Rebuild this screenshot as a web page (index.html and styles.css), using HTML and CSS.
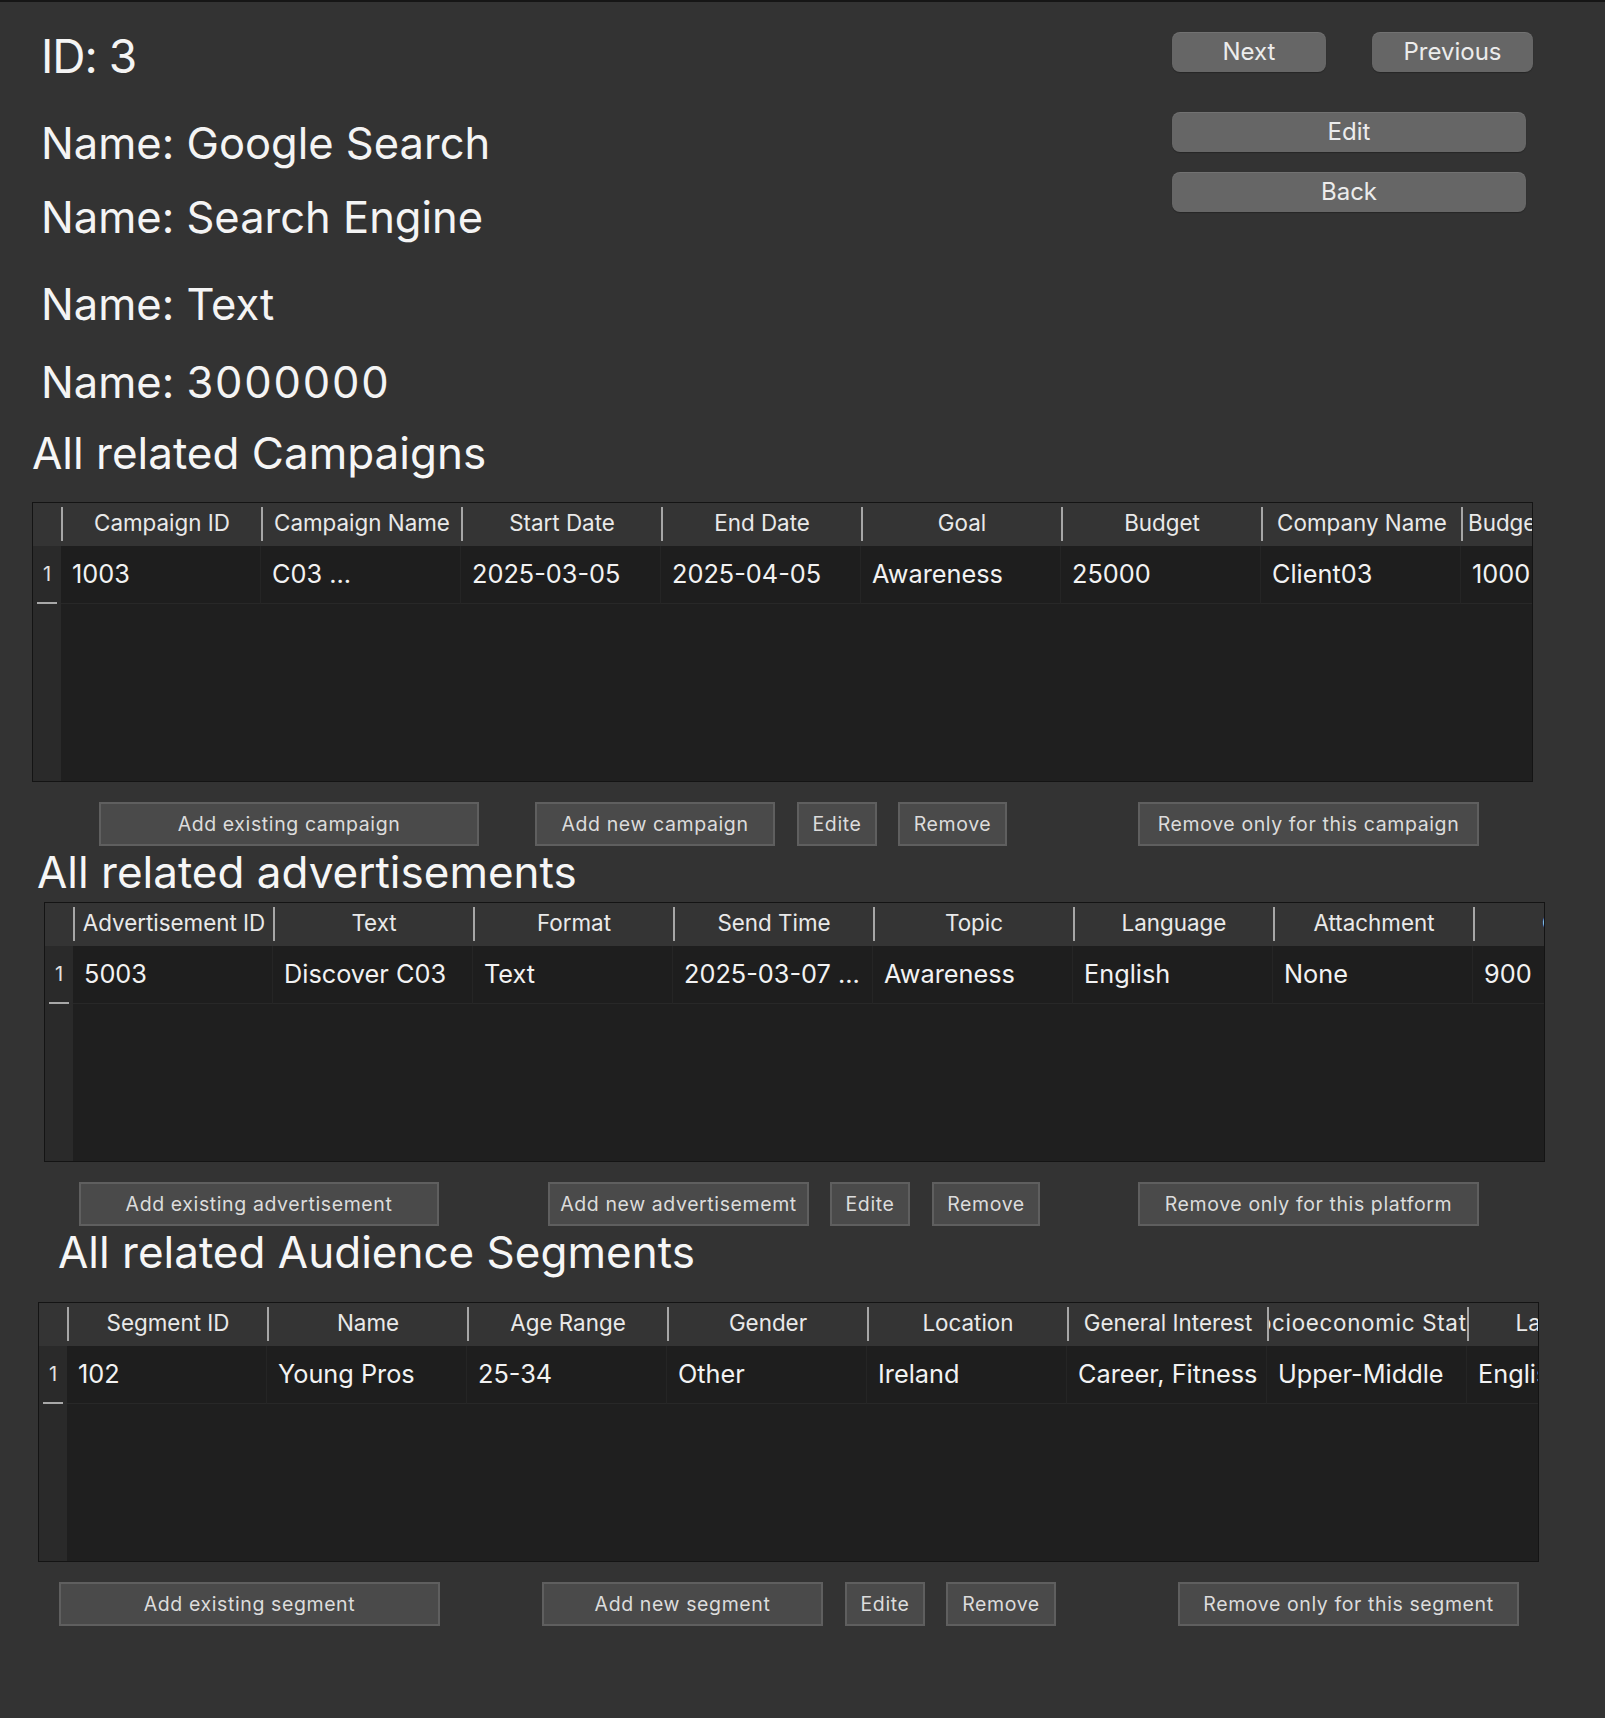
FILE: index.html
```html
<!DOCTYPE html>
<html lang="en">
<head>
<meta charset="utf-8">
<title>Platform details</title>
<link rel="stylesheet" href="styles.css">
</head>
<body>
<div class="app">
  <header class="top">
    <div class="info">
      <div class="id-line">ID: 3</div>
      <div class="field f1">Name: Google Search</div>
      <div class="field f2">Name: Search Engine</div>
      <div class="field f3">Name: Text</div>
      <div class="field f4">Name: <span class="num">3000000</span></div>
    </div>
    <nav class="nav">
      <div class="nav-row">
        <button class="pill pill-next">Next</button>
        <button class="pill pill-prev">Previous</button>
      </div>
      <button class="pill pill-wide pill-edit">Edit</button>
      <button class="pill pill-wide pill-back">Back</button>
    </nav>
  </header>

  <section class="section sec-campaigns">
    <h2 class="sec-title">All related Campaigns</h2>
    <div class="grid grid-tall">
      <div class="thead">
        <div class="corner"></div>
        <div class="th"><div class="th-label">Campaign ID</div></div>
        <div class="th"><div class="th-label">Campaign Name</div></div>
        <div class="th"><div class="th-label">Start Date</div></div>
        <div class="th"><div class="th-label">End Date</div></div>
        <div class="th"><div class="th-label">Goal</div></div>
        <div class="th"><div class="th-label">Budget</div></div>
        <div class="th"><div class="th-label">Company Name</div></div>
        <div class="th"><div class="th-label th-start">Budget Remaining</div></div>
      </div>
      <div class="tbody">
        <div class="rowhead"><div class="rownum">1</div></div>
        <div class="rows">
          <div class="tr">
            <div class="td">1003</div>
            <div class="td">C03 ...</div>
            <div class="td">2025-03-05</div>
            <div class="td">2025-04-05</div>
            <div class="td">Awareness</div>
            <div class="td">25000</div>
            <div class="td">Client03</div>
            <div class="td">1000</div>
          </div>
        </div>
      </div>
    </div>
    <div class="actions acts-campaign">
      <button class="act">Add existing campaign</button>
      <button class="act">Add new campaign</button>
      <button class="act">Edite</button>
      <button class="act">Remove</button>
      <button class="act">Remove only for this campaign</button>
    </div>
  </section>

  <section class="section sec-ads">
    <h2 class="sec-title">All related advertisements</h2>
    <div class="grid">
      <div class="thead">
        <div class="corner"></div>
        <div class="th"><div class="th-label">Advertisement ID</div></div>
        <div class="th"><div class="th-label">Text</div></div>
        <div class="th"><div class="th-label">Format</div></div>
        <div class="th"><div class="th-label">Send Time</div></div>
        <div class="th"><div class="th-label">Topic</div></div>
        <div class="th"><div class="th-label">Language</div></div>
        <div class="th"><div class="th-label">Attachment</div></div>
        <div class="th"><div class="th-label"><span>Clicks</span></div></div>
      </div>
      <div class="tbody">
        <div class="rowhead"><div class="rownum">1</div></div>
        <div class="rows">
          <div class="tr">
            <div class="td">5003</div>
            <div class="td">Discover C03</div>
            <div class="td">Text</div>
            <div class="td">2025-03-07 ...</div>
            <div class="td">Awareness</div>
            <div class="td">English</div>
            <div class="td">None</div>
            <div class="td">900</div>
          </div>
        </div>
      </div>
    </div>
    <div class="actions acts-ads">
      <button class="act">Add existing advertisement</button>
      <button class="act">Add new advertisememt</button>
      <button class="act">Edite</button>
      <button class="act">Remove</button>
      <button class="act">Remove only for this platform</button>
    </div>
  </section>

  <section class="section sec-segments">
    <h2 class="sec-title">All related Audience Segments</h2>
    <div class="grid">
      <div class="thead">
        <div class="corner"></div>
        <div class="th"><div class="th-label">Segment ID</div></div>
        <div class="th"><div class="th-label">Name</div></div>
        <div class="th"><div class="th-label">Age Range</div></div>
        <div class="th"><div class="th-label">Gender</div></div>
        <div class="th"><div class="th-label">Location</div></div>
        <div class="th"><div class="th-label">General Interest</div></div>
        <div class="th"><div class="th-label"><span class="wide-label">Socioeconomic Status</span></div></div>
        <div class="th"><div class="th-label"><span>Language</span></div></div>
      </div>
      <div class="tbody">
        <div class="rowhead"><div class="rownum">1</div></div>
        <div class="rows">
          <div class="tr">
            <div class="td">102</div>
            <div class="td">Young Pros</div>
            <div class="td">25-34</div>
            <div class="td">Other</div>
            <div class="td">Ireland</div>
            <div class="td">Career, Fitness</div>
            <div class="td">Upper-Middle</div>
            <div class="td">English</div>
          </div>
        </div>
      </div>
    </div>
    <div class="actions acts-segments">
      <button class="act">Add existing segment</button>
      <button class="act">Add new segment</button>
      <button class="act">Edite</button>
      <button class="act">Remove</button>
      <button class="act">Remove only for this segment</button>
    </div>
  </section>
</div>
</body>
</html>
```

FILE: styles.css
```css
* { box-sizing: border-box; }

html, body {
  margin: 0;
  padding: 0;
  background: #333333;
}

body {
  font-family: Inter, "Noto Sans", "Liberation Sans", sans-serif;
  color: #f4f4f4;
}

.app {
  border-top: 2px solid #161616;
  min-height: 1718px;
  background: #333333;
}

/* ---------- top area ---------- */
.top {
  display: flex;
  justify-content: space-between;
}

.info {
  padding: 26px 0 0 41px;
}

.id-line {
  font-size: 46px;
  line-height: 56px;
  letter-spacing: -1px;
}

.field {
  font-size: 43.5px;
  line-height: 52px;
}

.num { letter-spacing: 1.8px; }

.f1 { margin-top: 33px; }
.f2 { margin-top: 22px; }
.f3 { margin-top: 35px; }
.f4 { margin-top: 26px; }

.nav {
  width: 361px;
  margin-right: 72px;
  padding-top: 30px;
  display: flex;
  flex-direction: column;
}

.nav-row {
  display: flex;
  justify-content: space-between;
}

.pill {
  height: 40px;
  border: none;
  border-radius: 8px;
  background: #666666;
  color: #ececec;
  font-family: inherit;
  font-size: 24px;
  line-height: 38px;
  padding: 0 0 1px;
  box-shadow: inset 0 1px 0 rgba(255, 255, 255, 0.08), 0 1px 1px rgba(0, 0, 0, 0.25);
}

.pill-next { width: 154px; }
.pill-prev { width: 161px; }
.pill-wide { width: 354px; }
.pill-edit { margin-top: 40px; }
.pill-back { margin-top: 20px; }

/* ---------- sections ---------- */
.sec-title {
  margin: 0;
  font-size: 44px;
  line-height: 44px;
  font-weight: 400;
  color: #f6f6f6;
  white-space: nowrap;
}

.sec-campaigns .sec-title { margin: 23px 0 0 32px; }
.sec-ads .sec-title { margin: 4px 0 0 37px; }
.sec-segments .sec-title { margin: 4px 0 0 58px; }

.grid {
  width: 1501px;
  height: 260px;
  border: 1px solid #141414;
  background: #1f1f1f;
  overflow: hidden;
  display: flex;
  flex-direction: column;
}

.grid-tall { height: 280px; }

.sec-campaigns .grid { margin: 27px 0 0 32px; }
.sec-ads .grid { margin: 8px 0 0 44px; }
.sec-segments .grid { margin: 28px 0 0 38px; }

.thead {
  display: flex;
  height: 43px;
  flex-shrink: 0;
  background: #343434;
}

.corner {
  width: 28px;
  flex-shrink: 0;
}

.th {
  width: 200px;
  flex-shrink: 0;
  padding: 4px 0 5px;
}

.th-label {
  height: 34px;
  padding-bottom: 3px;
  border-left: 2px solid #a6a6a6;
  display: flex;
  align-items: center;
  justify-content: center;
  overflow: hidden;
  white-space: nowrap;
  font-size: 22.4px;
  color: #e9e9e9;
}

.th-label span { flex-shrink: 0; }

.th-label .wide-label { letter-spacing: 0.7px; }

.th-label.th-start {
  justify-content: flex-start;
  padding-left: 5px;
}

.tbody {
  flex: 1;
  display: flex;
}

.rowhead {
  width: 28px;
  flex-shrink: 0;
  background: #2a2a2a;
}

.rownum {
  height: 58px;
  margin: 0 4px;
  border-bottom: 2px solid #a8a8a8;
  display: flex;
  align-items: center;
  justify-content: center;
  font-size: 20px;
  color: #e2e2e2;
}

.rows { flex: 1; }

.tr {
  display: flex;
  height: 58px;
}

.td {
  width: 200px;
  flex-shrink: 0;
  padding: 0 0 2px 11px;
  display: flex;
  align-items: center;
  white-space: nowrap;
  overflow: hidden;
  font-size: 25.3px;
  color: #f2f2f2;
  background: #1e1e1e;
  border-right: 1px solid #252525;
  border-bottom: 1px solid #282828;
}

/* ---------- action buttons ---------- */
.actions {
  display: flex;
  height: 44px;
  margin-top: 20px;
}

.act {
  height: 44px;
  padding: 0;
  border: 2px solid #5f5f5f;
  border-radius: 0;
  background: #4a4a4a;
  color: #dcdcdc;
  font-family: inherit;
  font-size: 19.5px;
  letter-spacing: 0.6px;
  white-space: nowrap;
}

.acts-campaign .act:nth-child(1) { margin-left: 99px; width: 380px; }
.acts-campaign .act:nth-child(2) { margin-left: 56px; width: 240px; }
.acts-campaign .act:nth-child(3) { margin-left: 22px; width: 80px; }
.acts-campaign .act:nth-child(4) { margin-left: 21px; width: 109px; }
.acts-campaign .act:nth-child(5) { margin-left: 131px; width: 341px; }

.acts-ads .act:nth-child(1) { margin-left: 79px; width: 360px; }
.acts-ads .act:nth-child(2) { margin-left: 109px; width: 261px; }
.acts-ads .act:nth-child(3) { margin-left: 21px; width: 80px; }
.acts-ads .act:nth-child(4) { margin-left: 22px; width: 108px; }
.acts-ads .act:nth-child(5) { margin-left: 98px; width: 341px; }

.acts-segments .act:nth-child(1) { margin-left: 59px; width: 381px; }
.acts-segments .act:nth-child(2) { margin-left: 102px; width: 281px; }
.acts-segments .act:nth-child(3) { margin-left: 22px; width: 80px; }
.acts-segments .act:nth-child(4) { margin-left: 21px; width: 110px; }
.acts-segments .act:nth-child(5) { margin-left: 122px; width: 341px; }
```
